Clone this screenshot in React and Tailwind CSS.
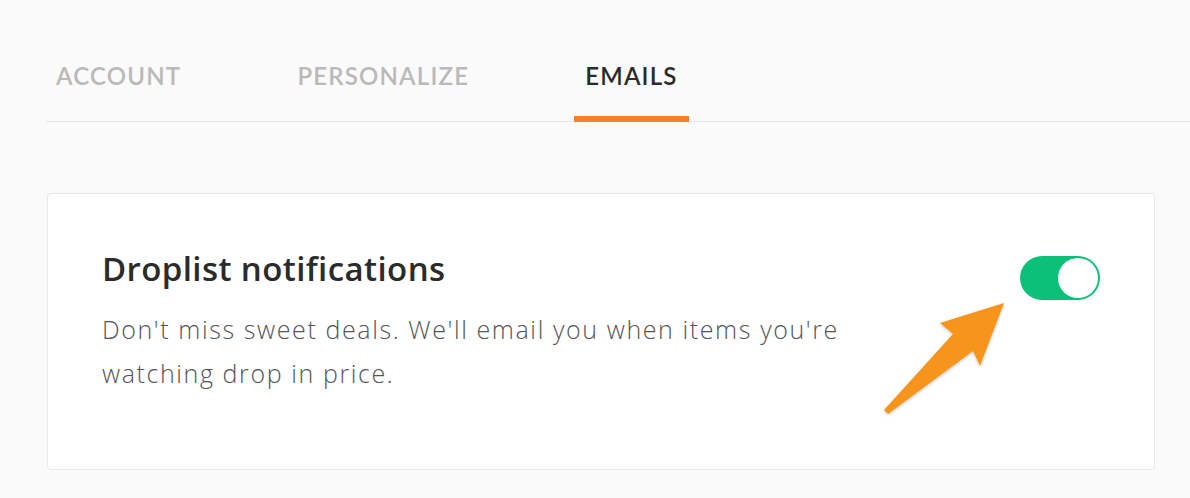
export default function App() {
  const tabs = ["ACCOUNT", "PERSONALIZE", "EMAILS"];
  const active = "EMAILS";

  return (
    <div
      className="relative w-[1190px] h-[498px] overflow-hidden bg-[#fafafa]"
      style={{ fontFamily: "Lato, 'Noto Sans', sans-serif" }}
    >
      {/* Tabs */}
      <div className="ml-[46px] pt-[59px] border-b border-[#e6e6e6]">
        <div className="flex gap-[94px] -ml-[1px]">
          {tabs.map((t) => (
            <div
              key={t}
              className={
                "px-[11px] pb-[23px] text-[24px] leading-[34px] font-semibold tracking-[1.2px] border-b-[6px] -mb-[1px] " +
                (t === active
                  ? "text-[#2b2b2b] border-[#f5822a]"
                  : "text-[#b9b9b9] border-transparent")
              }
            >
              {t}
            </div>
          ))}
        </div>
      </div>

      {/* Card */}
      <div
        className="ml-[47px] mt-[71px] w-[1108px] h-[277px] bg-white border border-[#e8e8e8] rounded-[4px] flex justify-between pl-[54px] pr-[54px] pt-[55px]"
        style={{ fontFamily: "'Open Sans', 'Noto Sans', sans-serif" }}
      >
        <div>
          <h2 className="text-[33px] font-semibold text-[#2b2b2b] leading-[40px] tracking-[0.4px]">
            Droplist notifications
          </h2>
          <p className="mt-[18px] w-[800px] text-[25px] font-light text-[#555] leading-[44px] tracking-[1.6px]">
            Don't miss sweet deals. We'll email you when items you're watching drop in price.
          </p>
        </div>
        <div className="mt-[7px] w-[80px] h-[44px] rounded-full bg-[#0cc07a] flex items-center justify-end p-[2px]">
          <div className="w-[40px] h-[40px] rounded-full bg-white" />
        </div>
      </div>

      {/* Arrow */}
      <svg
        className="absolute left-0 top-0 pointer-events-none"
        width="1190"
        height="498"
        viewBox="0 0 1190 498"
      >
        <defs>
          <filter id="sh" x="-20%" y="-20%" width="140%" height="140%">
            <feDropShadow dx="0" dy="1" stdDeviation="1.5" floodColor="#000" floodOpacity="0.25" />
          </filter>
        </defs>
        <polygon
          points="1004,303 940,323 953,334 884,410 888,414 973,351 980,366"
          fill="#f7941d"
          filter="url(#sh)"
        />
      </svg>
    </div>
  );
}
